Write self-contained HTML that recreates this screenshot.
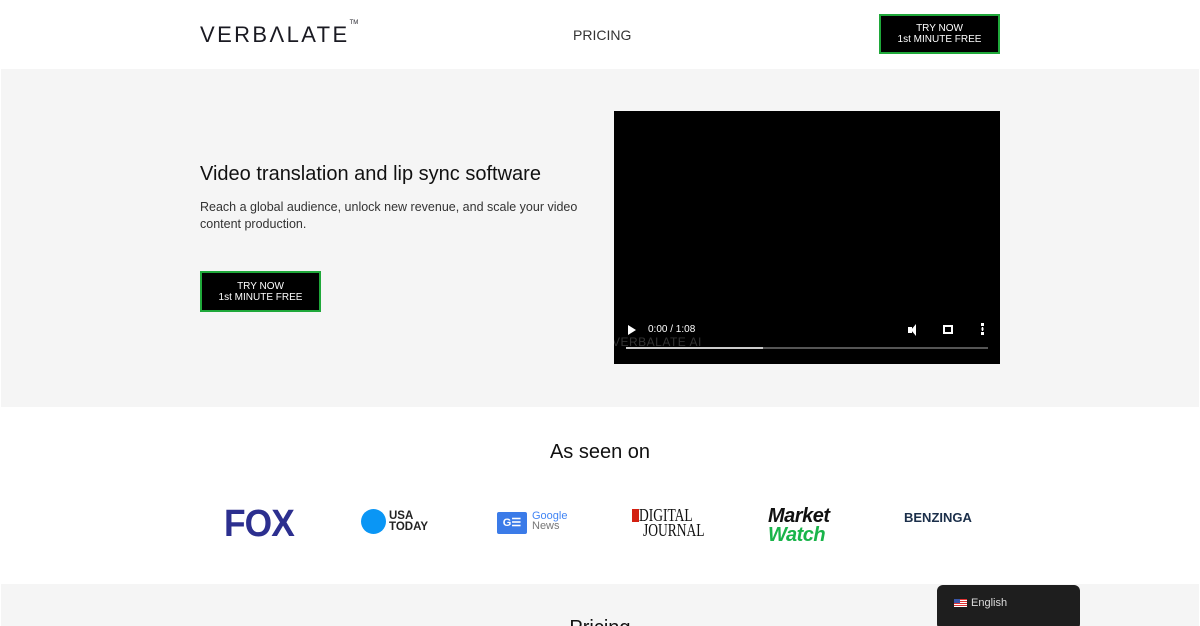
<!DOCTYPE html>
<html><head><meta charset="utf-8"><style>
*{margin:0;padding:0;box-sizing:border-box}
html,body{width:1200px;height:626px;overflow:hidden}
body{background:#fff;font-family:"Liberation Sans",sans-serif;position:relative}
.abs{position:absolute}
.btn{background:#000;border:2px solid #1fa83a;color:#fff;font-size:10px;line-height:11px;text-align:center;display:flex;flex-direction:column;justify-content:center}
</style></head><body>
<div class="abs" style="left:200px;top:22px;font-size:22px;letter-spacing:2.4px;color:#1a1a22;font-weight:300">VERBΛLATE<sup style="font-size:6px;letter-spacing:0;vertical-align:top;position:relative;top:-2px">TM</sup></div>
<div class="abs" style="left:573px;top:27px;font-size:14px;color:#333">PRICING</div>
<div class="abs btn" style="left:879px;top:14px;width:121px;height:40px">TRY NOW<br>1st MINUTE FREE</div>

<div class="abs" style="left:1px;top:69px;width:1198px;height:338px;background:#f5f5f5"></div>
<div class="abs" style="left:200px;top:163px;font-size:20px;color:#111">Video translation and lip sync software</div>
<div class="abs" style="left:200px;top:199px;width:390px;font-size:12.5px;line-height:17px;color:#333">Reach a global audience, unlock new revenue, and scale your video content production.</div>
<div class="abs btn" style="left:200px;top:271px;width:121px;height:41px">TRY NOW<br>1st MINUTE FREE</div>

<div class="abs" style="left:614px;top:111px;width:386px;height:253px;background:#000;overflow:hidden">
<div class="abs" style="left:-2px;top:224px;font-size:12px;color:#333;letter-spacing:0.5px">VERBALATE AI</div>
<div class="abs" style="left:14px;top:214px;width:0;height:0;border-left:8px solid #fff;border-top:5px solid transparent;border-bottom:5px solid transparent"></div>
<div class="abs" style="left:34px;top:213px;font-size:10px;color:#fff">0:00 / 1:08</div>
<div class="abs" style="left:294px;top:216px;width:4px;height:6px;background:#fff"></div>
<div class="abs" style="left:297px;top:213px;width:0;height:0;border-right:5px solid #fff;border-top:6px solid transparent;border-bottom:6px solid transparent"></div>
<div class="abs" style="left:329px;top:214px;width:10px;height:9px;border:2px dashed #fff"></div>
<div class="abs" style="left:367px;top:212px;width:3px;height:12px;border-top:3px dotted #fff;border-bottom:3px dotted #fff;background:radial-gradient(#fff 45%,transparent 50%)"></div>
<div class="abs" style="left:12px;top:236px;width:362px;height:2px;background:#555"></div>
<div class="abs" style="left:12px;top:236px;width:137px;height:2px;background:#ccc"></div>
</div>

<div class="abs" style="left:0;top:441px;width:1200px;text-align:center;font-size:20px;color:#111">As seen on</div>
<div class="abs" style="left:224px;top:503px;font-size:38px;font-weight:bold;color:#2c2f8f;letter-spacing:-1px;transform:scaleX(0.93);transform-origin:left">FOX</div>
<div class="abs" style="left:361px;top:509px;width:25px;height:25px;border-radius:50%;background:#0a96f5"></div>
<div class="abs" style="left:389px;top:511px;font-size:11.5px;font-weight:bold;line-height:11px;color:#222">USA<br>TODAY</div>
<div class="abs" style="left:497px;top:512px;width:30px;height:22px;background:#3b7be8;border-radius:2px;color:#fff;font-size:11px;font-weight:bold;text-align:center;line-height:22px">G☰</div>
<div class="abs" style="left:532px;top:511px;font-size:11px;line-height:10px;color:#4285f4">Google<br><span style="color:#777">News</span></div>
<div class="abs" style="left:632px;top:509px;width:7px;height:13px;background:#d32011"></div>
<div class="abs" style="left:639px;top:506px;font-family:'Liberation Serif',serif;font-size:18px;line-height:18px;color:#111;transform:scaleX(0.75);transform-origin:left">DIGITAL</div>
<div class="abs" style="left:643px;top:520px;font-family:'Liberation Serif',serif;font-size:18px;color:#111;transform:scaleX(0.75);transform-origin:left">JOURNAL</div>
<div class="abs" style="left:768px;top:507px;font-size:20px;line-height:19px;font-weight:bold;font-style:italic;color:#111;letter-spacing:-0.5px">Market<br><span style="color:#19b44a">Watch</span></div>
<div class="abs" style="left:904px;top:510px;font-size:13px;font-weight:bold;color:#1b2f4a">BENZINGA</div>

<div class="abs" style="left:1px;top:584px;width:1198px;height:42px;background:#f5f5f5"></div>
<div class="abs" style="left:0;top:617px;width:1200px;text-align:center;font-size:20px;color:#111">Pricing</div>
<div class="abs" style="left:937px;top:585px;width:143px;height:45px;background:#1e1e1e;border-radius:6px"></div>
<div class="abs" style="left:954px;top:599px;width:13px;height:8px;background:repeating-linear-gradient(#d33 0 1px,#fff 1px 2px)"><div style="width:6px;height:4px;background:#3a55a6"></div></div>
<div class="abs" style="left:971px;top:597px;font-size:11px;color:#ddd">English</div>
</body></html>
